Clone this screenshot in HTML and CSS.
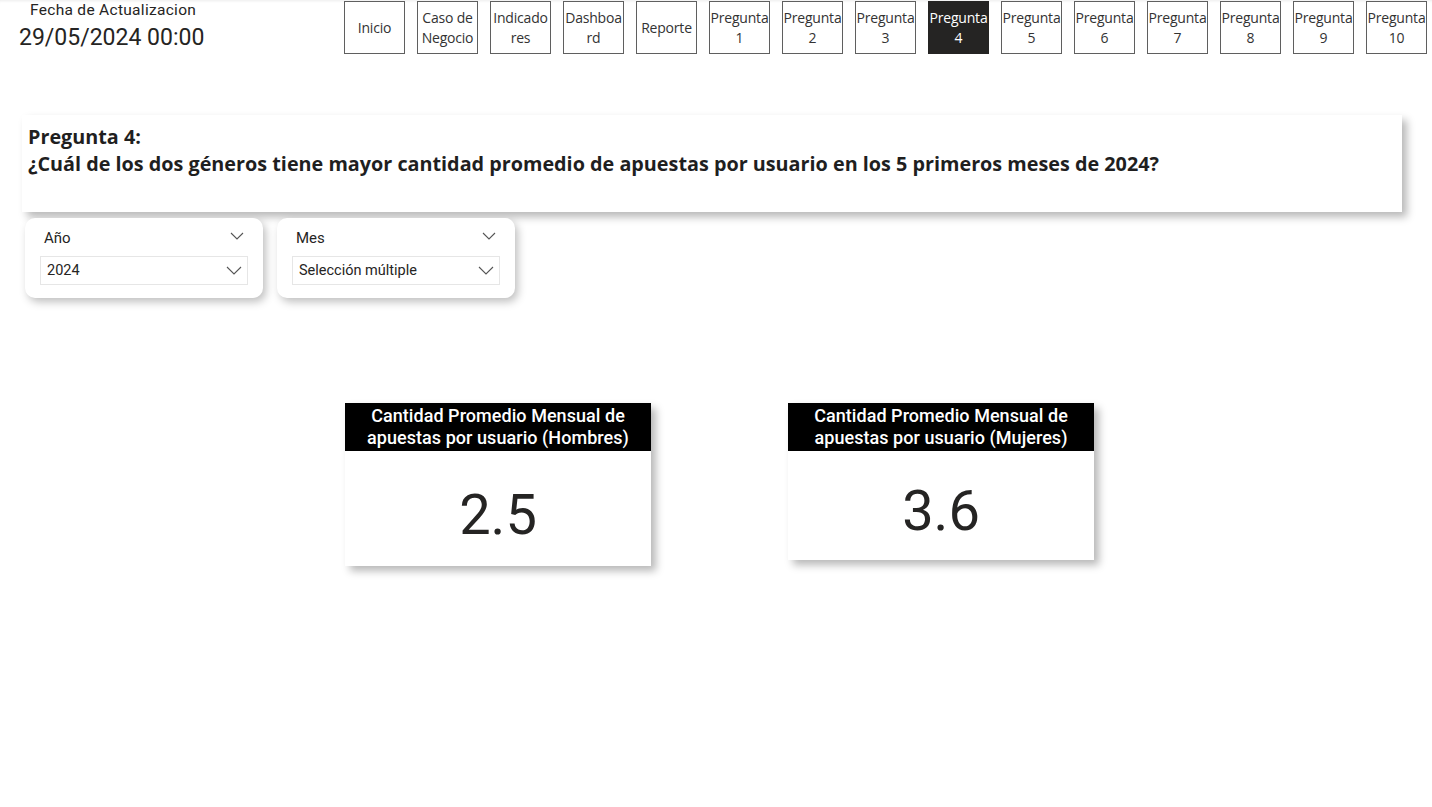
FILE: index.html
```html
<!DOCTYPE html>
<html lang="es">
<head>
<meta charset="utf-8">
<title>Pregunta 4</title>
<link rel="stylesheet" href="styles.css">
</head>
<body>
<header class="top">
  <div class="stamp">
    <div class="stamp-label">Fecha de Actualizacion</div>
    <div class="stamp-date">29/05/2024 00:00</div>
  </div>
  <nav class="nav">
    <div class="nbtn">Inicio</div>
    <div class="nbtn">Caso de<br>Negocio</div>
    <div class="nbtn">Indicado<br>res</div>
    <div class="nbtn">Dashboa<br>rd</div>
    <div class="nbtn">Reporte</div>
    <div class="nbtn">Pregunta<br>1</div>
    <div class="nbtn">Pregunta<br>2</div>
    <div class="nbtn">Pregunta<br>3</div>
    <div class="nbtn active">Pregunta<br>4</div>
    <div class="nbtn">Pregunta<br>5</div>
    <div class="nbtn">Pregunta<br>6</div>
    <div class="nbtn">Pregunta<br>7</div>
    <div class="nbtn">Pregunta<br>8</div>
    <div class="nbtn">Pregunta<br>9</div>
    <div class="nbtn">Pregunta<br>10</div>
  </nav>
</header>

<section class="question">
  <div class="q-title">Pregunta 4:</div>
  <div class="q-text">¿Cuál de los dos géneros tiene mayor cantidad promedio de apuestas por usuario en los 5 primeros meses de 2024?</div>
</section>

<section class="slicers">
  <div class="slicer">
    <div class="slicer-head">
      <span>Año</span>
      <svg class="chev" width="14" height="8" viewBox="0 0 14 8"><polyline points="1,1 7,7 13,1" fill="none" stroke="#555" stroke-width="1.1"/></svg>
    </div>
    <div class="dropdown">
      <span>2024</span>
      <svg class="chev" width="16" height="9" viewBox="0 0 16 9"><polyline points="1,1 8,8 15,1" fill="none" stroke="#555" stroke-width="1.1"/></svg>
    </div>
  </div>
  <div class="slicer">
    <div class="slicer-head">
      <span>Mes</span>
      <svg class="chev" width="14" height="8" viewBox="0 0 14 8"><polyline points="1,1 7,7 13,1" fill="none" stroke="#555" stroke-width="1.1"/></svg>
    </div>
    <div class="dropdown">
      <span>Selección múltiple</span>
      <svg class="chev" width="16" height="9" viewBox="0 0 16 9"><polyline points="1,1 8,8 15,1" fill="none" stroke="#555" stroke-width="1.1"/></svg>
    </div>
  </div>
</section>

<section class="cards">
  <div class="card card-a">
    <div class="card-head">Cantidad Promedio Mensual de<br>apuestas por usuario (Hombres)</div>
    <div class="card-value">2.5</div>
  </div>
  <div class="card card-b">
    <div class="card-head">Cantidad Promedio Mensual de<br>apuestas por usuario (Mujeres)</div>
    <div class="card-value">3.6</div>
  </div>
</section>
</body>
</html>
```

FILE: styles.css
```css
html, body {
  margin: 0;
  padding: 0;
  background: #ffffff;
}
body {
  width: 1432px;
  height: 807px;
  overflow: hidden;
  font-family: Roboto, "Liberation Sans", sans-serif;
  color: #252423;
}

.top {
  display: flex;
  height: 55px;
  box-shadow: inset 0 3px 3px -2px rgba(0,0,0,0.08);
}
.stamp {
  width: 344px;
  box-sizing: border-box;
  padding-left: 19px;
}
.stamp-label {
  padding-left: 11px;
  font-size: 15.5px;
  line-height: 18px;
  margin-top: 1px;
  letter-spacing: 0.3px;
  color: #252423;
}
.stamp-date {
  font-size: 23px;
  line-height: 28px;
  margin-top: 5px;
  letter-spacing: 0;
  color: #252423;
}

.nav {
  display: flex;
  gap: 12px;
  padding-top: 1px;
}
.nbtn {
  width: 61px;
  height: 53px;
  box-sizing: border-box;
  border: 1px solid #5f5f5f;
  display: flex;
  align-items: center;
  justify-content: center;
  text-align: center;
  font-family: "Open Sans", "Noto Sans", sans-serif;
  font-size: 14px;
  line-height: 20px;
  letter-spacing: -0.2px;
  color: #333333;
  background: #ffffff;
  white-space: nowrap;
  overflow: hidden;
}
.nbtn.active {
  background: #252423;
  color: #ffffff;
  border-color: #252423;
}

.question {
  margin: 60px 0 0 22px;
  width: 1380px;
  height: 97px;
  box-sizing: border-box;
  padding: 9px 0 0 6px;
  background: #fff;
  box-shadow: 5px 5px 8px rgba(0,0,0,0.28);
  font-family: "Open Sans", "Noto Sans", sans-serif;
  font-weight: 700;
  color: #1f1f1f;
}
.q-title {
  font-size: 19.8px;
  line-height: 26px;
}
.q-text {
  font-size: 19.8px;
  line-height: 28px;
  letter-spacing: 0;
}

.slicers {
  display: flex;
  gap: 14px;
  margin: 6px 0 0 25px;
}
.slicer {
  width: 238px;
  height: 80px;
  box-sizing: border-box;
  padding: 9px 15px 0 15px;
  background: #fff;
  border-radius: 10px;
  box-shadow: 3px 4px 9px rgba(0,0,0,0.25);
}
.slicer-head {
  display: flex;
  justify-content: space-between;
  align-items: center;
  padding: 0 4px 0 4px;
  height: 22px;
  font-size: 15px;
  color: #252423;
}
.slicer-head .chev {
  margin-top: -4px;
}
.dropdown {
  margin-top: 7px;
  height: 29px;
  box-sizing: border-box;
  border: 1px solid #e6e6e6;
  display: flex;
  justify-content: space-between;
  align-items: center;
  padding: 0 5px 0 6px;
  font-size: 14.5px;
  color: #252423;
}

.cards {
  display: flex;
  align-items: flex-start;
  gap: 137px;
  margin: 105px 0 0 345px;
}
.card {
  width: 306px;
  background: #fff;
  box-shadow: 5px 5px 8px rgba(0,0,0,0.28);
}
.card-a { height: 163px; }
.card-b { height: 157px; }
.card-head {
  background: #000;
  color: #fff;
  height: 48px;
  box-sizing: border-box;
  padding-top: 2px;
  text-align: center;
  font-size: 18px;
  font-weight: 500;
  line-height: 21.5px;
  letter-spacing: 0.05px;
}
.card-value {
  text-align: center;
  font-size: 56px;
  line-height: 60px;
  margin-top: 34px;
  color: #252423;
}
.card-b .card-value {
  margin-top: 30px;
}
```
